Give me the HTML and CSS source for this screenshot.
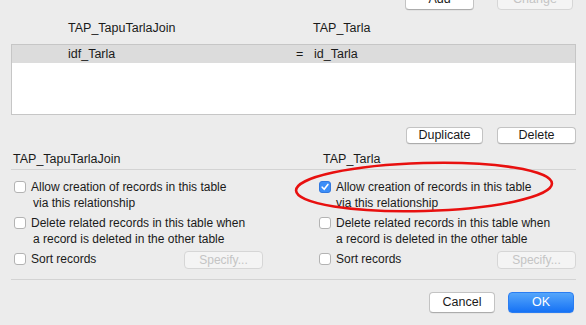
FILE: index.html
```html
<!DOCTYPE html>
<html lang="en">
  <head>
    <meta charset="UTF-8" />
    <title>Edit Relationship</title>
    <link rel="stylesheet" href="styles.css">
  </head>
  <body>
    <div class="dialog">
      <!-- Top actions (cut off by the window edge) -->
      <div class="top-actions">
        <button class="btn add">Add</button>
        <button class="btn change" disabled>Change</button>
      </div>

      <!-- Match fields -->
      <div class="table-heads">
        <span class="head-left">TAP_TapuTarlaJoin</span>
        <span class="head-right">TAP_Tarla</span>
      </div>
      <div class="match-table">
        <div class="match-row selected">
          <span class="field-left">idf_Tarla</span>
          <span class="op">=</span>
          <span class="field-right">id_Tarla</span>
        </div>
      </div>

      <div class="row-actions">
        <button class="btn dup">Duplicate</button>
        <button class="btn del">Delete</button>
      </div>

      <!-- Options -->
      <div class="options">
        <div class="opt-col left">
          <div class="opt-title">TAP_TapuTarlaJoin</div>
          <label class="check">
            <span class="box"></span>
            <span class="label">Allow creation of records in this table<br><span class="wrap">via this relationship</span></span>
          </label>
          <label class="check">
            <span class="box"></span>
            <span class="label">Delete related records in this table when<br><span class="wrap">a record is deleted in the other table</span></span>
          </label>
          <div class="sort-row">
            <label class="check">
              <span class="box"></span>
              <span class="label">Sort records</span>
            </label>
            <button class="btn specify" disabled>Specify...</button>
          </div>
        </div>

        <div class="opt-col right">
          <div class="opt-title">TAP_Tarla</div>
          <label class="check">
            <span class="box checked">
              <svg width="10" height="10" viewBox="0 0 10 10"><path d="M2.2 5.2 L4.2 7.3 L7.9 2.4" fill="none" stroke="#fff" stroke-width="1.6" stroke-linecap="round" stroke-linejoin="round"/></svg>
            </span>
            <span class="label">Allow creation of records in this table<br>via this relationship</span>
          </label>
          <label class="check">
            <span class="box"></span>
            <span class="label">Delete related records in this table when<br>a record is deleted in the other table</span>
          </label>
          <div class="sort-row">
            <label class="check">
              <span class="box"></span>
              <span class="label">Sort records</span>
            </label>
            <button class="btn specify" disabled>Specify...</button>
          </div>
        </div>
      </div>

      <div class="footer">
        <button class="btn cancel">Cancel</button>
        <button class="btn ok">OK</button>
      </div>

      <!-- red annotation ellipse -->
      <svg class="mark" width="264" height="54" viewBox="0 0 264 54">
        <ellipse cx="131" cy="26" rx="128" ry="24" transform="rotate(-1.6 131 26)" fill="none" stroke="#e8100f" stroke-width="2.6"/>
      </svg>
    </div>
  </body>
</html>
```

FILE: styles.css
```css
body {
  margin: 0;
  background: #ececec;
  font-family: "Liberation Sans", Arial, sans-serif;
  font-size: 12.5px;
  color: #1a1a1a;
  overflow: hidden;
}
.dialog {
  position: relative;
  display: flow-root;
  width: 586px;
  height: 325px;
}
.btn {
  font-family: inherit;
  font-size: 12.5px;
  color: #1a1a1a;
  background: #fff;
  border: 1px solid #c3c3c3;
  border-bottom-color: #acacac;
  border-radius: 4px;
  height: 18px;
  padding: 0;
  line-height: 15px;
  box-shadow: 0 0.5px 0 rgba(0, 0, 0, 0.08);
}
.btn:disabled {
  color: #c4c4c4;
  background: #f4f4f4;
  border-color: #d6d6d6;
  box-shadow: none;
}
.top-actions {
  display: flex;
  justify-content: flex-end;
  gap: 23px;
  margin-top: -11px;
  padding-right: 13px;
}
.top-actions .btn {
  height: 21px;
}
.add { width: 69px; }
.change { width: 76px; }

.table-heads {
  display: flex;
  height: 32px;
  align-items: center;
  margin-top: 2px;
}
.head-left { margin-left: 68px; width: 245px; }
.match-table {
  margin-left: 11px;
  width: 563px;
  height: 69px;
  background: #fff;
  border: 1px solid #c6c6c6;
}
.match-row {
  display: flex;
  align-items: center;
  height: 18px;
}
.match-row.selected { background: #dcdcdc; }
.field-left { margin-left: 56px; width: 228px; }
.op { width: 18px; }

.row-actions {
  display: flex;
  justify-content: flex-end;
  gap: 14px;
  padding-right: 10px;
  margin-top: 12px;
}
.row-actions .btn { height: 17px; }
.dup { width: 77px; }
.del { width: 79px; }

.options {
  display: grid;
  grid-template-columns: 305px 260px;
  margin-left: 11px;
  width: 565px;
  margin-top: 5px;
  border-bottom: 1px solid #d3d3d3;
  padding-bottom: 10px;
  font-size: 12px;
}
.opt-title {
  height: 20px;
  line-height: 20px;
  font-size: 12.5px;
  border-bottom: 1px solid #d3d3d3;
  padding-left: 2px;
  margin-bottom: 9px;
}
.right .opt-title { padding-left: 7px; }
.check {
  display: flex;
  align-items: flex-start;
  gap: 5px;
  line-height: 16px;
  margin-bottom: 4px;
}
.left .check { margin-left: 3px; }
.right .check { margin-left: 3px; }
.box {
  flex: none;
  width: 10px;
  height: 10px;
  margin-top: 2px;
  background: #fff;
  border: 1px solid #b3b3b3;
  border-radius: 3px;
  display: flex;
  align-items: center;
  justify-content: center;
}
.box.checked {
  background: #3c8ef8;
  border-color: #3279e0;
}
.wrap { margin-left: 2px; }
.sort-row {
  display: flex;
  justify-content: space-between;
  align-items: flex-start;
  margin-top: 2px;
}
.sort-row .check { margin-bottom: 0; }
.specify {
  width: 79px;
  font-size: 12px;
}
.left .specify { margin-right: 53px; }

.footer {
  display: flex;
  justify-content: flex-end;
  gap: 13px;
  padding-right: 12px;
  margin-top: 12px;
}
.footer .btn { height: 21px; width: 66px; }
.ok {
  background: linear-gradient(#55a6fb, #1672f5);
  border-color: #2a7df2;
  color: #fff;
}
.mark {
  position: absolute;
  left: 293px;
  top: 161px;
}
```
